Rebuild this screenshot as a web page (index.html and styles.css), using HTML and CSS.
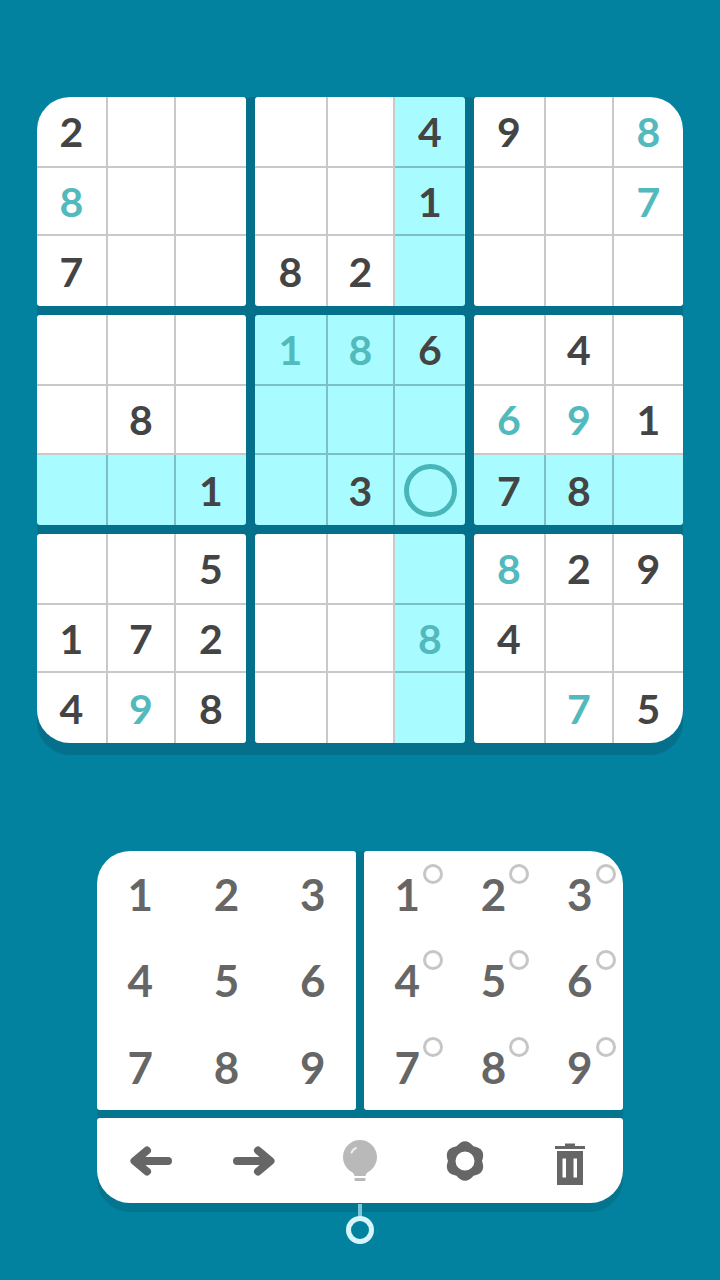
FILE: index.html
```html
<!DOCTYPE html>
<html lang="en">
<head>
<meta charset="utf-8">
<title>Sudoku</title>
<link rel="stylesheet" href="styles.css">
</head>
<body>
<main class="game">
  <section class="board">
    <div class="box col-a row-a">
      <div class="cell">2</div><div class="cell"></div><div class="cell"></div>
      <div class="cell user">8</div><div class="cell"></div><div class="cell"></div>
      <div class="cell">7</div><div class="cell"></div><div class="cell"></div>
    </div>
    <div class="box col-b row-a">
      <div class="cell"></div><div class="cell"></div><div class="cell hl">4</div>
      <div class="cell"></div><div class="cell"></div><div class="cell hl">1</div>
      <div class="cell">8</div><div class="cell">2</div><div class="cell hl"></div>
    </div>
    <div class="box col-c row-a">
      <div class="cell">9</div><div class="cell"></div><div class="cell user">8</div>
      <div class="cell"></div><div class="cell"></div><div class="cell user">7</div>
      <div class="cell"></div><div class="cell"></div><div class="cell"></div>
    </div>
    <div class="box col-a row-b">
      <div class="cell"></div><div class="cell"></div><div class="cell"></div>
      <div class="cell"></div><div class="cell">8</div><div class="cell"></div>
      <div class="cell hl"></div><div class="cell hl"></div><div class="cell hl">1</div>
    </div>
    <div class="box col-b row-b">
      <div class="cell hl user">1</div><div class="cell hl user">8</div><div class="cell hl">6</div>
      <div class="cell hl"></div><div class="cell hl"></div><div class="cell hl"></div>
      <div class="cell hl"></div><div class="cell hl">3</div><div class="cell hl"><span class="cursor"></span></div>
    </div>
    <div class="box col-c row-b">
      <div class="cell"></div><div class="cell">4</div><div class="cell"></div>
      <div class="cell user">6</div><div class="cell user">9</div><div class="cell">1</div>
      <div class="cell hl">7</div><div class="cell hl">8</div><div class="cell hl"></div>
    </div>
    <div class="box col-a row-c">
      <div class="cell"></div><div class="cell"></div><div class="cell">5</div>
      <div class="cell">1</div><div class="cell">7</div><div class="cell">2</div>
      <div class="cell">4</div><div class="cell user">9</div><div class="cell">8</div>
    </div>
    <div class="box col-b row-c">
      <div class="cell"></div><div class="cell"></div><div class="cell hl"></div>
      <div class="cell"></div><div class="cell"></div><div class="cell hl user">8</div>
      <div class="cell"></div><div class="cell"></div><div class="cell hl"></div>
    </div>
    <div class="box col-c row-c">
      <div class="cell user">8</div><div class="cell">2</div><div class="cell">9</div>
      <div class="cell">4</div><div class="cell"></div><div class="cell"></div>
      <div class="cell"></div><div class="cell user">7</div><div class="cell">5</div>
    </div>
  </section>

  <section class="controls">
    <div class="pads">
      <div class="pad pad-digits">
        <button class="key">1</button><button class="key">2</button><button class="key">3</button>
        <button class="key">4</button><button class="key">5</button><button class="key">6</button>
        <button class="key">7</button><button class="key">8</button><button class="key">9</button>
      </div>
      <div class="pad pad-notes">
        <button class="key note">1</button><button class="key note">2</button><button class="key note">3</button>
        <button class="key note">4</button><button class="key note">5</button><button class="key note">6</button>
        <button class="key note">7</button><button class="key note">8</button><button class="key note">9</button>
      </div>
    </div>
    <div class="toolbar">
      <button class="tool" aria-label="Undo">
        <svg class="icon" width="48" height="36" viewBox="0 0 48 36"><path class="arrow" d="M42 18H9M21 7.500L8.500 18 21 28.500"/></svg>
      </button>
      <button class="tool" aria-label="Redo">
        <svg class="icon" width="48" height="36" viewBox="0 0 48 36"><path class="arrow" d="M6 18H39M27 7.500L39.500 18 27 28.500"/></svg>
      </button>
      <button class="tool" aria-label="Hint">
        <svg class="icon" width="40" height="48" viewBox="0 0 40 48">
          <path class="bulb" d="M20 3C10.600 3 3 10.600 3 20c0 6.600 3.700 12 8 14.500 1.400.8 3 2 3.500 4.500h11c.5-2.500 2.100-3.700 3.500-4.500 4.300-2.500 8-7.900 8-14.500C37 10.600 29.400 3 20 3z"/>
          <rect class="bulb" x="14.500" y="41" width="11" height="3" rx="1"/>
          <path class="glint" d="M11.500 15.500c1-2.300 2.400-3.600 4.500-4.500"/>
        </svg>
      </button>
      <button class="tool" aria-label="Settings">
        <svg class="icon" width="48" height="48" viewBox="0 0 48 48">
          <path class="solid" fill-rule="evenodd" d="M32.500 9.300Q45.600 11.500 41 24 45.600 36.500 32.500 38.700 24 49 15.500 38.700 2.400 36.500 7 24 2.400 11.500 15.500 9.300 24-1 32.500 9.300zM24 14.500a9.500 9.500 0 1 0 0 19 9.500 9.500 0 0 0 0-19z"/>
        </svg>
      </button>
      <button class="tool" aria-label="Erase">
        <svg class="icon" width="36" height="48" viewBox="0 0 36 48">
          <path class="solid" fill-rule="evenodd" d="M13 6.500h10V9h10v3H3V9h10zM5 14h26v34H5zM10.500 21.500v19H14v-19zM21.500 21.500v19H25v-19z"/>
        </svg>
      </button>
    </div>
    <span class="hint-stem"></span>
    <span class="hint-ring"></span>
  </section>
</main>
</body>
</html>
```

FILE: styles.css
```css
* {
  box-sizing: border-box;
}

html,
body {
  margin: 0;
  height: 100%;
}

body {
  background: #02829f;
  font-family: "Lato", "Liberation Sans", sans-serif;
}

.game {
  display: flex;
  flex-direction: column;
  align-items: center;
  padding-top: 97px;
}

/* Board: darker plate that shows through the gaps and as a lip below */
.board {
  width: 646px;
  display: grid;
  grid-template-columns: 209px 210px 209px;
  grid-template-rows: 209px 210px 209px;
  gap: 9px;
  padding-bottom: 12px;
  background: #04708c;
  border-radius: 33px;
}

.box {
  display: grid;
  overflow: hidden;
  border-radius: 3px;
}

.col-a { grid-template-columns: 71px 68px 70px; }
.col-b { grid-template-columns: 73px 67px 70px; }
.col-c { grid-template-columns: 72px 68px 69px; }
.row-a { grid-template-rows: 71px 68px 70px; }
.row-b { grid-template-rows: 71px 69px 70px; }
.row-c { grid-template-rows: 71px 68px 70px; }

.box.col-a.row-a { border-top-left-radius: 33px; }
.box.col-c.row-a { border-top-right-radius: 33px; }
.box.col-a.row-c { border-bottom-left-radius: 33px; }
.box.col-c.row-c { border-bottom-right-radius: 33px; }

.cell {
  display: flex;
  align-items: center;
  justify-content: center;
  background: #fff;
  border-right: 2px solid #c9c9c9;
  border-bottom: 2px solid #c9c9c9;
  color: #444;
  font-size: 41px;
  font-weight: 700;
  line-height: 1;
}

.cell:nth-child(3n) {
  border-right: 0;
}

.cell:nth-child(n+7) {
  border-bottom: 0;
}

.cell.hl {
  background: #a8fcff;
  border-color: #7dbfc6;
}

.cell.user {
  color: #52b9bd;
}

.cursor {
  width: 53px;
  height: 53px;
  border: 5px solid #48b5b9;
  border-radius: 50%;
}

/* Input panels */
.controls {
  position: relative;
  width: 526px;
  margin-top: 96px;
  padding-bottom: 9px;
  background: #04758f;
  border-radius: 33px;
}

.pads {
  display: grid;
  grid-template-columns: 259px 259px;
  gap: 8px;
}

.pad {
  display: grid;
  grid-template-columns: repeat(3, 1fr);
  grid-template-rows: repeat(3, 1fr);
  height: 259px;
  background: #fff;
  border-radius: 3px;
}

.pad-digits { border-top-left-radius: 33px; }
.pad-notes { border-top-right-radius: 33px; }

.key {
  position: relative;
  padding: 0;
  border: 0;
  background: none;
  color: #666;
  font-family: inherit;
  font-size: 44px;
  font-weight: 700;
  line-height: 1;
}

/* Small ring beside each digit in the pencil-mark pad */
.key.note::after {
  content: "";
  position: absolute;
  left: 59px;
  top: 13px;
  width: 14px;
  height: 14px;
  border: 3.500px solid #c6c6c6;
  border-radius: 50%;
}

.toolbar {
  display: grid;
  grid-template-columns: repeat(5, 1fr);
  align-items: center;
  height: 85px;
  margin-top: 8px;
  background: #fff;
  border-radius: 3px 3px 33px 33px;
}

.tool {
  display: flex;
  align-items: center;
  justify-content: center;
  padding: 0;
  border: 0;
  background: none;
}

.icon {
  display: block;
}

.arrow {
  fill: none;
  stroke: #666;
  stroke-width: 8;
  stroke-linecap: round;
  stroke-linejoin: round;
}

.solid {
  fill: #666;
}

.bulb {
  fill: #b9b9b9;
}

.glint {
  fill: none;
  stroke: #eee;
  stroke-width: 2;
  stroke-linecap: round;
}

.hint-stem {
  position: absolute;
  left: 261px;
  top: 353px;
  width: 4px;
  height: 14px;
  background: #7cc8d8;
}

.hint-ring {
  position: absolute;
  left: 249px;
  top: 365px;
  width: 28px;
  height: 28px;
  border: 5px solid #d8f5fb;
  border-radius: 50%;
}
```
